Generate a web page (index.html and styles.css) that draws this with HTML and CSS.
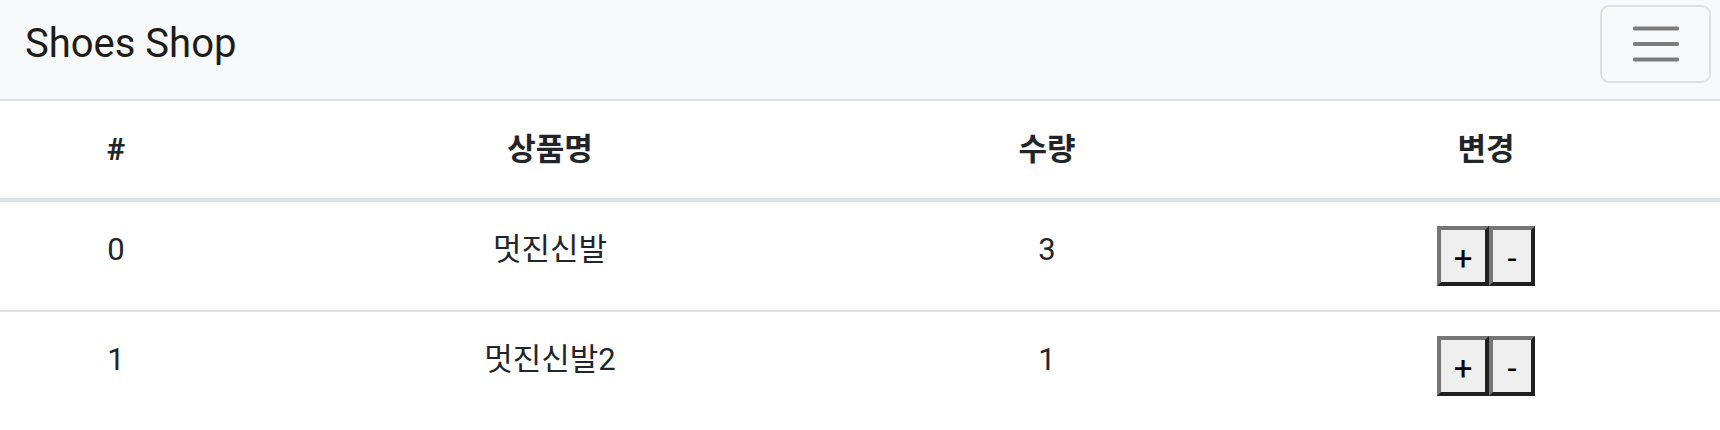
FILE: index.html
```html
<!DOCTYPE html>
<html lang="ko">
<head>
<meta charset="utf-8">
<title>Shoes Shop</title>
<link rel="stylesheet" href="styles.css">
</head>
<body>
<nav class="navbar">
  <a class="brand" href="#">Shoes Shop</a>
  <button class="toggler" type="button" aria-label="Toggle navigation">
    <svg class="toggler-icon" viewBox="0 0 30 30" width="58" height="58" aria-hidden="true">
      <path d="M4 7h22M4 15h22M4 23h22" stroke="rgba(0,0,0,0.5)" stroke-width="2" stroke-linecap="round" fill="none"/>
    </svg>
  </button>
</nav>
<table class="cart">
  <colgroup>
    <col class="c1"><col class="c2"><col class="c3"><col class="c4">
  </colgroup>
  <thead>
    <tr><th>#</th><th>상품명</th><th>수량</th><th>변경</th></tr>
  </thead>
  <tbody>
    <tr>
      <td>0</td><td>멋진신발</td><td>3</td>
      <td><div class="btns"><button class="btn plus">+</button><button class="btn minus">-</button></div></td>
    </tr>
    <tr>
      <td>1</td><td>멋진신발2</td><td>1</td>
      <td><div class="btns"><button class="btn plus">+</button><button class="btn minus">-</button></div></td>
    </tr>
  </tbody>
</table>
</body>
</html>
```

FILE: styles.css
```css
html, body {
  margin: 0;
  padding: 0;
  background: #ffffff;
}
body {
  width: 1720px;
  overflow: hidden;
  font-family: Roboto, "Noto Sans CJK KR", sans-serif;
  color: #212529;
  font-size: 31px;
}
.navbar {
  height: 99px;
  background: #f8f9fa;
  display: flex;
  justify-content: space-between;
  align-items: flex-start;
}
.brand {
  margin: 20px 0 0 25px;
  font-size: 40px;
  line-height: 47px;
  color: #1c1c1c;
  text-decoration: none;
}
.toggler {
  margin: 5px 9px 0 0;
  width: 111px;
  height: 78px;
  padding: 0;
  background: transparent;
  border: 2px solid rgba(0, 0, 0, 0.1);
  border-radius: 9px;
  display: flex;
  align-items: center;
  justify-content: center;
}
.toggler-icon {
  display: block;
}
.cart {
  width: 1746px;
  table-layout: fixed;
  border-collapse: separate;
  border-spacing: 0;
}
.c1 { width: 232px; }
.c2 { width: 636px; }
.c3 { width: 358px; }
.c4 { width: 520px; }
.cart th {
  font-weight: 700;
  text-align: center;
  padding: 25px 0;
  line-height: 47px;
  border-top: 2px solid #dee2e6;
  border-bottom: 4px solid #dee2e6;
}
.cart td {
  text-align: center;
  vertical-align: top;
  padding: 24px 0;
  line-height: 47px;
  border-top: 2px solid #dee2e6;
}
.cart tbody tr:first-child td {
  border-top: 0;
}
.btns {
  display: inline-flex;
  vertical-align: top;
}
.btn {
  height: 60px;
  padding: 6px 0 0;
  margin: 0;
  background: #efefef;
  border: 4px solid;
  border-color: #767676 #202020 #202020 #767676;
  border-radius: 0;
  font-family: Roboto, sans-serif;
  font-weight: 400;
  font-size: 33px;
  line-height: 46px;
  color: #000;
}
.plus { width: 52px; }
.minus { width: 46px; }
```
